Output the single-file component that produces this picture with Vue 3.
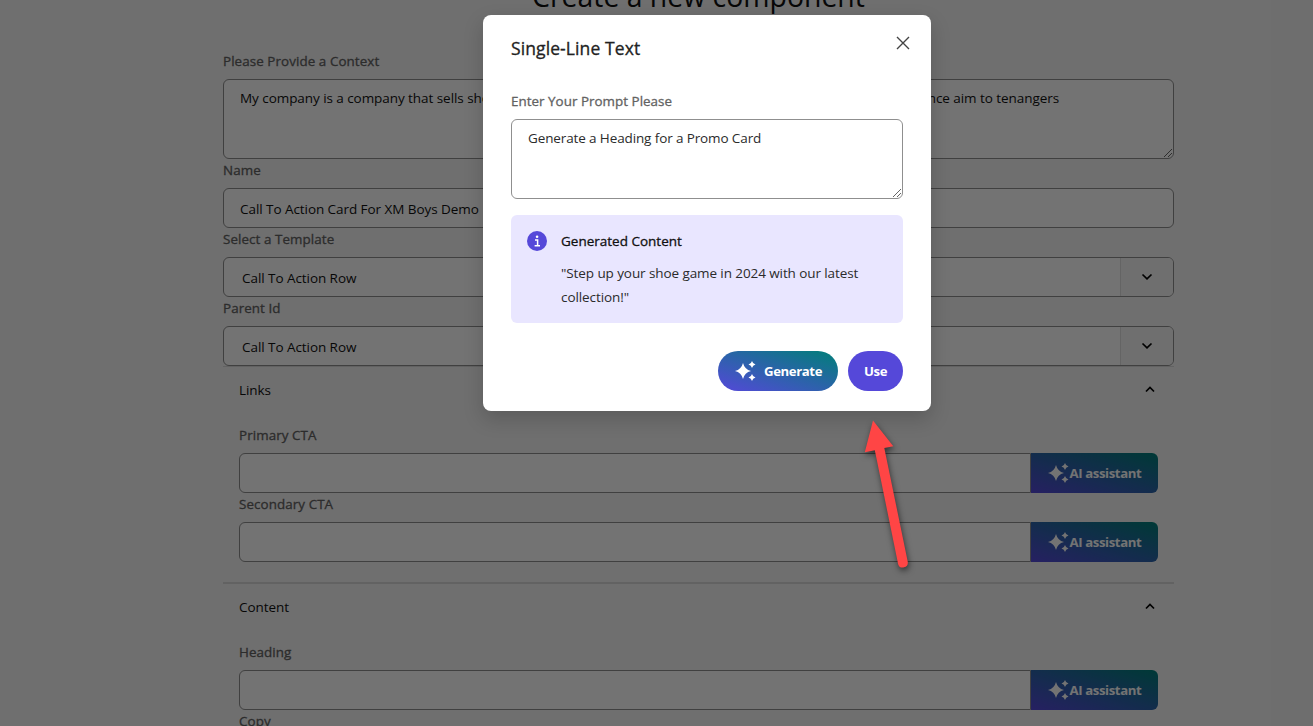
<script setup>
const sections = [
  { title: 'Links', fields: ['Primary CTA', 'Secondary CTA'] },
  { title: 'Content', fields: ['Heading', 'Copy'] },
]
const selects = ['Select a Template', 'Parent Id']
const sparkle =
  'M8 3 Q9.6 9.4 16 11 Q9.6 12.6 8 19 Q6.4 12.6 0 11 Q6.4 9.4 8 3Z M17 1 Q17.7 3.8 20.5 4.5 Q17.7 5.2 17 8 Q16.3 5.2 13.5 4.5 Q16.3 3.8 17 1Z M17 14 Q17.7 16.8 20.5 17.5 Q17.7 18.2 17 21 Q16.3 18.2 13.5 17.5 Q16.3 16.8 17 14Z'
</script>

<template>
  <div class="page">
    <main class="form">
      <h1><span>Create a new component</span></h1>

      <div class="label"><span>Please Provide a Context</span></div>
      <div class="box area">
        <span>My company is a company that sells shoes</span>
        <span class="tail">experience aim to tenangers</span>
        <svg class="grip" width="10" height="10" viewBox="0 0 10 10"><path d="M1 9L9 1M5 9L9 5" /></svg>
      </div>

      <div class="label"><span>Name</span></div>
      <div class="box name"><span>Call To Action Card For XM Boys Demo</span></div>

      <template v-for="s in selects" :key="s">
        <div class="label"><span>{{ s }}</span></div>
        <div class="box select">
          <span>Call To Action Row</span>
          <div class="drop">
            <svg width="12" height="8" viewBox="0 0 12 8"><path d="M1.5 1.5L6 5.9L10.5 1.5" /></svg>
          </div>
        </div>
      </template>

      <section v-for="s in sections" :key="s.title">
        <header>
          <span>{{ s.title }}</span>
          <svg width="10" height="7" viewBox="0 0 10 7"><path d="M1 5.5L5 1.5L9 5.5" /></svg>
        </header>
        <div class="body">
          <template v-for="f in s.fields" :key="f">
            <div class="label"><span>{{ f }}</span></div>
            <div class="group">
              <div class="box input"></div>
              <button class="ai">
                <svg width="21" height="22" viewBox="0 0 21 22"><path :d="sparkle" /></svg>
                <span>AI assistant</span>
              </button>
            </div>
          </template>
        </div>
      </section>
    </main>

    <div class="overlay">
      <div class="modal">
        <div class="head">
          <h2>Single-Line Text</h2>
          <svg width="14" height="14" viewBox="0 0 14 14"><path d="M1 1L13 13M13 1L1 13" /></svg>
        </div>
        <div class="label"><span>Enter Your Prompt Please</span></div>
        <div class="box area prompt">
          <span>Generate a Heading for a Promo Card</span>
          <svg class="grip" width="10" height="10" viewBox="0 0 10 10"><path d="M1 9L9 1M5 9L9 5" /></svg>
        </div>
        <div class="alert">
          <svg width="20" height="20" viewBox="0 0 20 20">
            <circle cx="10" cy="10" r="10" fill="#5548d9" />
            <circle cx="10.1" cy="5.7" r="1.3" fill="#fff" />
            <path d="M8 9H10.6V14.6M7.6 14.8H13" fill="none" stroke="#fff" stroke-width="1.5" />
          </svg>
          <div>
            <div class="a-title"><span>Generated Content</span></div>
            <p>"Step up your shoe game in 2024 with our latest collection!"</p>
          </div>
        </div>
        <div class="actions">
          <button class="gen">
            <svg width="21" height="22" viewBox="0 0 21 22"><path :d="sparkle" /></svg>
            <span>Generate</span>
          </button>
          <button class="use"><span>Use</span></button>
        </div>
      </div>
    </div>

    <svg class="arrow" width="70" height="180" viewBox="850 410 70 180">
      <path d="M873 420.5L893.3 446.3L884.3 448L907.8 562A5 5 0 0 1 898.2 564.4L874.8 450.2L864.8 452.3Z" />
    </svg>
  </div>
</template>

<style>
body { margin: 0; overflow: hidden; }
</style>

<style scoped>
* { box-sizing: border-box; }
.page {
  position: relative;
  width: 1313px;
  height: 726px;
  overflow: hidden;
  background: #f5f5f5;
  font-family: "Open Sans", "Noto Sans", sans-serif;
  font-size: 13.5px;
  letter-spacing: -0.06px;
  color: #111;
}
.form { width: 951px; margin-left: 223px; }
span { white-space: nowrap; }
h1 {
  margin: -24px 0 34px;
  height: 40px;
  line-height: 40px;
  text-align: center;
  font-size: 28.4px;
  letter-spacing: 0;
  font-weight: 400;
}
.label {
  height: 21px;
  line-height: 22px;
  margin-bottom: 8px;
  font-size: 13.4px;
  letter-spacing: 0.08px;
  -webkit-text-stroke: 0.3px currentColor;
  color: #626262;
}
.modal .label { letter-spacing: 0.03px; }
.box {
  position: relative;
  display: flex;
  align-items: center;
  height: 40px;
  border: 1px solid #8f8f8f;
  border-radius: 6px;
  background: #fff;
  padding: 0 16px;
}
.area { height: 80px; align-items: flex-start; padding-top: 8px; line-height: 20px; }
.name { padding-top: 2px; }
.tail { margin-left: auto; margin-right: 98px; }
.grip { position: absolute; right: 0; bottom: 0; fill: none; stroke: #666; stroke-width: 1; }
.select { padding: 2px 0 0 18px; }
.drop {
  display: flex;
  align-items: center;
  justify-content: center;
  width: 53px;
  height: 38px;
  margin: -2px 0 0 auto;
  border-left: 1px solid #dedede;
  border-radius: 0 5px 5px 0;
  background: #f5f5f5;
}
.drop svg, header svg { fill: none; stroke: #000; stroke-width: 1.7; }
section { border-top: 1px solid #dadada; border-bottom: 1px solid #dadada; }
header {
  display: flex;
  align-items: center;
  justify-content: space-between;
  height: 47px;
  padding: 0 19px 2px 16px;
}
.body { padding: 10px 16px 20px; }
.group { display: flex; }
.input { flex: 1; border-radius: 6px 0 0 6px; }
button {
  display: flex;
  align-items: center;
  border: 0;
  padding: 0;
  height: 40px;
  color: #fff;
  font-family: inherit;
  font-size: 13.2px;
  letter-spacing: -0.4px;
  font-weight: 700;
}
button svg { fill: #fff; flex: none; }
.ai {
  width: 127px;
  padding-left: 17px;
  border-radius: 0 6px 6px 0;
  background: linear-gradient(to top right, #5548d9, #007f78);
}
.ai span { margin-left: 0.5px; }
.overlay {
  position: absolute;
  inset: 0;
  padding: 15px 0 0 483px;
  background: rgba(0, 0, 0, 0.55);
}
.modal {
  width: 448px;
  height: 396px;
  padding: 20px 28px;
  border-radius: 8px;
  background: #fff;
  box-shadow: 0 8px 20px rgba(0, 0, 0, 0.18);
}
.head { display: flex; justify-content: space-between; height: 55px; }
.head svg { margin-top: 1px; margin-right: -7px; fill: none; stroke: #444; stroke-width: 1.4; }
h2 {
  margin: 0;
  font-size: 17.5px;
  letter-spacing: 0.1px;
  line-height: 27px;
  font-weight: 400;
  -webkit-text-stroke: 0.3px currentColor;
  color: #222;
}
.prompt { margin-bottom: 16px; color: #2b2b2b; letter-spacing: -0.12px; }
.alert {
  display: flex;
  gap: 14px;
  height: 108px;
  padding: 16px;
  border-radius: 6px;
  background: #e9e6ff;
}
.alert svg { flex: none; }
.a-title {
  height: 20px;
  line-height: 20px;
  letter-spacing: 0;
  -webkit-text-stroke: 0.3px currentColor;
  color: #111;
}
p { margin: 10px 0 0; line-height: 24px; color: #2b2b2b; letter-spacing: -0.09px; }
.actions { display: flex; justify-content: flex-end; gap: 10px; margin-top: 28px; }
.gen {
  width: 120px;
  padding-left: 17px;
  gap: 8px;
  border-radius: 20px;
  background: linear-gradient(to top right, #5548d9, #007f78);
}
.use { width: 55px; justify-content: center; border-radius: 20px; background: #5548d9; }
.arrow { position: absolute; left: 850px; top: 410px; fill: #ff4545; filter: drop-shadow(1px 3px 3px rgba(0, 0, 0, 0.55)); }
</style>
